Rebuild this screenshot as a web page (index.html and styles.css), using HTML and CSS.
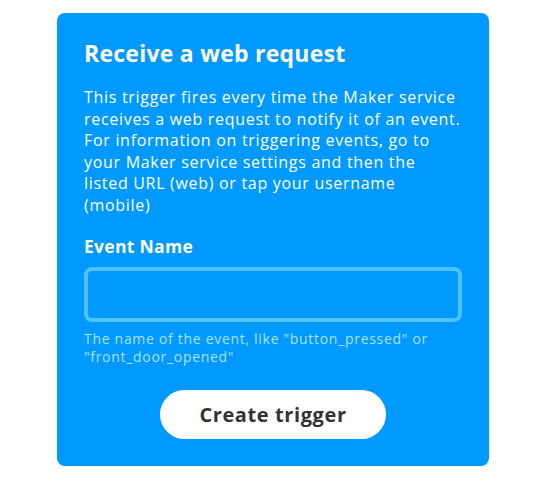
FILE: index.html
```html
<!DOCTYPE html>
<html>
<head>
<meta charset="utf-8">
<link rel="stylesheet" href="styles.css">
</head>
<body>
<div class="card">
  <h1 class="title">Receive a web request</h1>
  <p class="desc">This trigger fires every time the Maker service<br>receives a web request to notify it of an event.<br>For information on triggering events, go to<br>your Maker service settings and then the<br>listed URL (web) or tap your username<br>(mobile)</p>
  <label class="label">Event Name</label>
  <div class="input"></div>
  <p class="help">The name of the event, like "button_pressed" or "front_door_opened"</p>
  <div class="actions"><button class="btn">Create trigger</button></div>
</div>
</body>
</html>
```
FILE: styles.css
```css
html, body { margin: 0; padding: 0; background: #fff; }
body { font-family: "Open Sans", "Lato", sans-serif; }
.card {
  box-sizing: border-box;
  margin: 13px 0 0 57px;
  width: 432px;
  height: 453px;
  background: #0099ff;
  border-radius: 8px;
  padding: 25px 27px 0 27px;
  color: #fff;
}
.title {
  margin: 0;
  font-size: 23px;
  line-height: 30px;
  font-weight: 700;
  letter-spacing: 0.25px;
}
.desc {
  margin: 19px -16px 0 0;
  font-size: 16px;
  line-height: 21.6px;
  font-weight: 400;
  letter-spacing: 0.7px;
}
.label {
  display: block;
  margin-top: 17px;
  font-size: 17.5px;
  line-height: 24px;
  font-weight: 700;
  letter-spacing: 0.3px;
}
.input {
  box-sizing: border-box;
  margin-top: 9px;
  height: 55px;
  border: 4px solid #4cc3ff;
  border-radius: 8px;
}
.help {
  margin: 8px 0 0 0;
  font-size: 14px;
  line-height: 18px;
  color: #abe2ff;
  letter-spacing: 0.7px;
}
.actions {
  display: flex;
  justify-content: center;
  margin-top: 24px;
}
.btn {
  width: 226px;
  height: 49px;
  border: none;
  border-radius: 25px;
  background: #fff;
  color: #333;
  font-family: "Open Sans", "Lato", sans-serif;
  font-size: 20px;
  font-weight: 700;
  padding: 0;
  letter-spacing: 0.6px;
}
```
